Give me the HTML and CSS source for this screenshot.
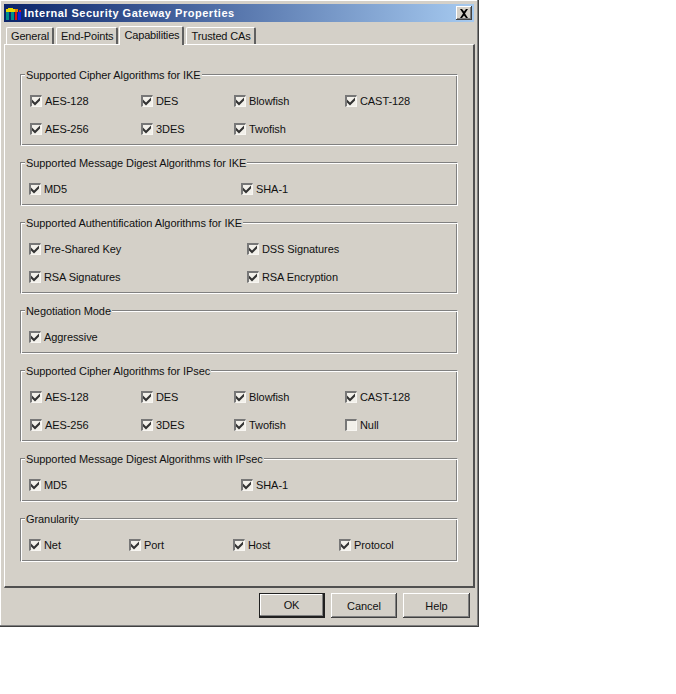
FILE: index.html
```html
<!DOCTYPE html>
<html lang="en">
<head>
<meta charset="utf-8">
<title>Internal Security Gateway Properties</title>
<link rel="stylesheet" href="styles.css">
</head>
<body>
<svg width="0" height="0" class="defs">
  <symbol id="tick" viewBox="0 0 9 9"><path d="M0 2.500V5.500L3 8.500 8 3.500V.5L3 5.500z" fill="#333"/></symbol>
</svg>
<div class="window">
  <div class="titlebar">
    <svg class="appicon" width="16" height="13" viewBox="0 0 16 13">
      <rect x="0" y="2" width="9" height="3" fill="#e8d800"/>
      <rect x="2" y="1" width="5" height="1" fill="#e8d800"/>
      <rect x="0" y="5" width="3" height="8" fill="#00908c"/>
      <rect x="5" y="5" width="3" height="8" fill="#00908c"/>
      <rect x="9" y="2" width="3" height="3" fill="#e88000"/>
      <rect x="9" y="5" width="2" height="8" fill="#e01010"/>
      <rect x="13" y="3" width="2" height="2" fill="#e01010"/>
      <rect x="12" y="5" width="3" height="8" fill="#1020e0"/>
    </svg>
    <span class="title">Internal Security Gateway Properties</span>
    <span class="close">
      <svg width="10" height="9" viewBox="0 0 10 9"><path d="M1 0h2l2 2.500L7 0h2L6 4.500 9 9H7L5 6.500 3 9H1l3-4.500z" fill="#000"/></svg>
    </span>
  </div>

  <div class="tabs">
    <span class="tab">General</span>
    <span class="tab">End-Points</span>
    <span class="tab active">Capabilities</span>
    <span class="tab">Trusted CAs</span>
  </div>

  <div class="panel">
    <section class="group">
      <h3 class="legend">Supported Cipher Algorithms for IKE</h3>
      <div class="grid four">
        <label class="check"><span class="box"><svg class="tick"><use href="#tick"/></svg></span>AES-128</label>
        <label class="check"><span class="box"><svg class="tick"><use href="#tick"/></svg></span>DES</label>
        <label class="check"><span class="box"><svg class="tick"><use href="#tick"/></svg></span>Blowfish</label>
        <label class="check"><span class="box"><svg class="tick"><use href="#tick"/></svg></span>CAST-128</label>
        <label class="check"><span class="box"><svg class="tick"><use href="#tick"/></svg></span>AES-256</label>
        <label class="check"><span class="box"><svg class="tick"><use href="#tick"/></svg></span>3DES</label>
        <label class="check"><span class="box"><svg class="tick"><use href="#tick"/></svg></span>Twofish</label>
      </div>
    </section>
    <section class="group">
      <h3 class="legend">Supported Message Digest Algorithms for IKE</h3>
      <div class="grid two-a">
        <label class="check"><span class="box"><svg class="tick"><use href="#tick"/></svg></span>MD5</label>
        <label class="check"><span class="box"><svg class="tick"><use href="#tick"/></svg></span>SHA-1</label>
      </div>
    </section>
    <section class="group">
      <h3 class="legend">Supported Authentification Algorithms for IKE</h3>
      <div class="grid two-b">
        <label class="check"><span class="box"><svg class="tick"><use href="#tick"/></svg></span>Pre-Shared Key</label>
        <label class="check"><span class="box"><svg class="tick"><use href="#tick"/></svg></span>DSS Signatures</label>
        <label class="check"><span class="box"><svg class="tick"><use href="#tick"/></svg></span>RSA Signatures</label>
        <label class="check"><span class="box"><svg class="tick"><use href="#tick"/></svg></span>RSA Encryption</label>
      </div>
    </section>
    <section class="group">
      <h3 class="legend">Negotiation Mode</h3>
      <div class="grid two-a">
        <label class="check"><span class="box"><svg class="tick"><use href="#tick"/></svg></span>Aggressive</label>
      </div>
    </section>
    <section class="group">
      <h3 class="legend">Supported Cipher Algorithms for IPsec</h3>
      <div class="grid four">
        <label class="check"><span class="box"><svg class="tick"><use href="#tick"/></svg></span>AES-128</label>
        <label class="check"><span class="box"><svg class="tick"><use href="#tick"/></svg></span>DES</label>
        <label class="check"><span class="box"><svg class="tick"><use href="#tick"/></svg></span>Blowfish</label>
        <label class="check"><span class="box"><svg class="tick"><use href="#tick"/></svg></span>CAST-128</label>
        <label class="check"><span class="box"><svg class="tick"><use href="#tick"/></svg></span>AES-256</label>
        <label class="check"><span class="box"><svg class="tick"><use href="#tick"/></svg></span>3DES</label>
        <label class="check"><span class="box"><svg class="tick"><use href="#tick"/></svg></span>Twofish</label>
        <label class="check"><span class="box"></span>Null</label>
      </div>
    </section>
    <section class="group">
      <h3 class="legend">Supported Message Digest Algorithms with IPsec</h3>
      <div class="grid two-a">
        <label class="check"><span class="box"><svg class="tick"><use href="#tick"/></svg></span>MD5</label>
        <label class="check"><span class="box"><svg class="tick"><use href="#tick"/></svg></span>SHA-1</label>
      </div>
    </section>
    <section class="group">
      <h3 class="legend">Granularity</h3>
      <div class="grid gran">
        <label class="check"><span class="box"><svg class="tick"><use href="#tick"/></svg></span>Net</label>
        <label class="check"><span class="box"><svg class="tick"><use href="#tick"/></svg></span>Port</label>
        <label class="check"><span class="box"><svg class="tick"><use href="#tick"/></svg></span>Host</label>
        <label class="check"><span class="box"><svg class="tick"><use href="#tick"/></svg></span>Protocol</label>
      </div>
    </section>
  </div>

  <div class="buttons">
    <button class="btn default">OK</button>
    <button class="btn">Cancel</button>
    <button class="btn help">Help</button>
  </div>
</div>
</body>
</html>
```

FILE: styles.css
```css
* { box-sizing: border-box; }
html, body { margin: 0; padding: 0; background: #fff; }
body { font: 11px "Liberation Sans", Arial, sans-serif; letter-spacing: -0.08px; color: #111; }
.defs { position: absolute; }

.window {
  width: 479px;
  height: 627px;
  background: #d4d0c8;
  padding: 4px 4px 0 3px;
  border-right: 1px solid #404040;
  border-bottom: 1px solid #404040;
  box-shadow: inset -1px -1px 0 #808080, inset 1px 1px 0 #fff;
  display: flex;
  flex-direction: column;
}

.titlebar {
  height: 18px;
  margin-left: 1px;
  padding: 0 2px;
  display: flex;
  align-items: center;
  background: linear-gradient(to right, #0a246a, #a6caf0);
  color: #fff;
}
.appicon { flex: none; margin-right: 2px; }
.title { font: bold 11px "Liberation Sans", Arial, sans-serif; flex: 1; white-space: nowrap; letter-spacing: 0.52px; }
.close {
  width: 16px;
  height: 14px;
  background: #d4d0c8;
  display: flex;
  align-items: center;
  justify-content: center;
  box-shadow: inset -1px -1px 0 #404040, inset 1px 1px 0 #fff, inset -2px -2px 0 #808080;
}

.tabs {
  display: flex;
  align-items: flex-end;
  height: 22px;
  padding-left: 3px;
  position: relative;
  z-index: 1;
}
.tab {
  height: 17px;
  padding: 2px 3px 0 4px;
  margin-right: 2px;
  border-top: 1px solid #fff;
  border-left: 1px solid #fff;
  border-right: 2px solid #606060;
  border-radius: 2px 2px 0 0;
  white-space: nowrap;
  letter-spacing: -0.15px;
}
.tab.active {
  height: 19px;
  margin-bottom: -1px;
  margin-left: -1px;
  padding: 2px 3px 0 4px;
  background: #d4d0c8;
}

.panel {
  height: 544px;
  width: 471px;
  margin-left: 1px;
  padding: 29px 15px 0;
  border-top: 1px solid #fff;
  border-left: 1px solid #fff;
  border-right: 2px solid #505050;
  border-bottom: 2px solid #505050;
  display: flex;
  flex-direction: column;
  gap: 16px;
}

.group {
  width: 438px;
  border: 1px solid #808080;
  border-right-color: #fff;
  border-bottom-color: #fff;
  box-shadow: inset 1px 1px 0 #fff, inset -1px -1px 0 #808080;
  padding: 0 0 2px 8px;
}
.legend {
  margin: -7px 0 0 -4px;
  padding: 0 1px;
  width: fit-content;
  font: inherit;
  line-height: 15px;
  height: 13px;
  background: #d4d0c8;
  position: relative;
}

.grid { display: grid; grid-auto-rows: 28px; padding-top: 6px; }
.four { grid-template-columns: 111px 93px 111px 1fr; margin-left: 1px; }
.two-a { grid-template-columns: 212px 1fr; }
.two-b { grid-template-columns: 218px 1fr; }
.gran { grid-template-columns: 100px 104px 106px 1fr; }

.check {
  display: flex;
  align-items: center;
  height: 28px;
  white-space: nowrap;
}
.box {
  flex: none;
  width: 12px;
  height: 12px;
  margin-right: 3px;
  background: #f2f0ea;
  border-top: 2px solid #777;
  border-left: 2px solid #777;
  border-right: 1px solid #f8f6f2;
  border-bottom: 1px solid #f8f6f2;
  display: flex;
}
.tick { width: 9px; height: 9px; }

.buttons {
  flex: 1;
  display: flex;
  justify-content: flex-end;
  gap: 6px;
  padding: 5px 4px 0 0;
}
.btn {
  width: 66px;
  height: 25px;
  padding: 0;
  background: #d4d0c8;
  border: 0;
  border-radius: 0;
  font: inherit;
  letter-spacing: inherit;
  color: #111;
  box-shadow: inset -1px -1px 0 #404040, inset 1px 1px 0 #fff, inset -2px -2px 0 #808080;
}
.btn.help { width: 67px; }
.btn.default {
  border: 1px solid #202020;
  border-right-width: 2px;
  border-bottom-width: 2px;
  box-shadow: inset -1px -1px 0 #808080, inset 1px 1px 0 #fff;
}
```
